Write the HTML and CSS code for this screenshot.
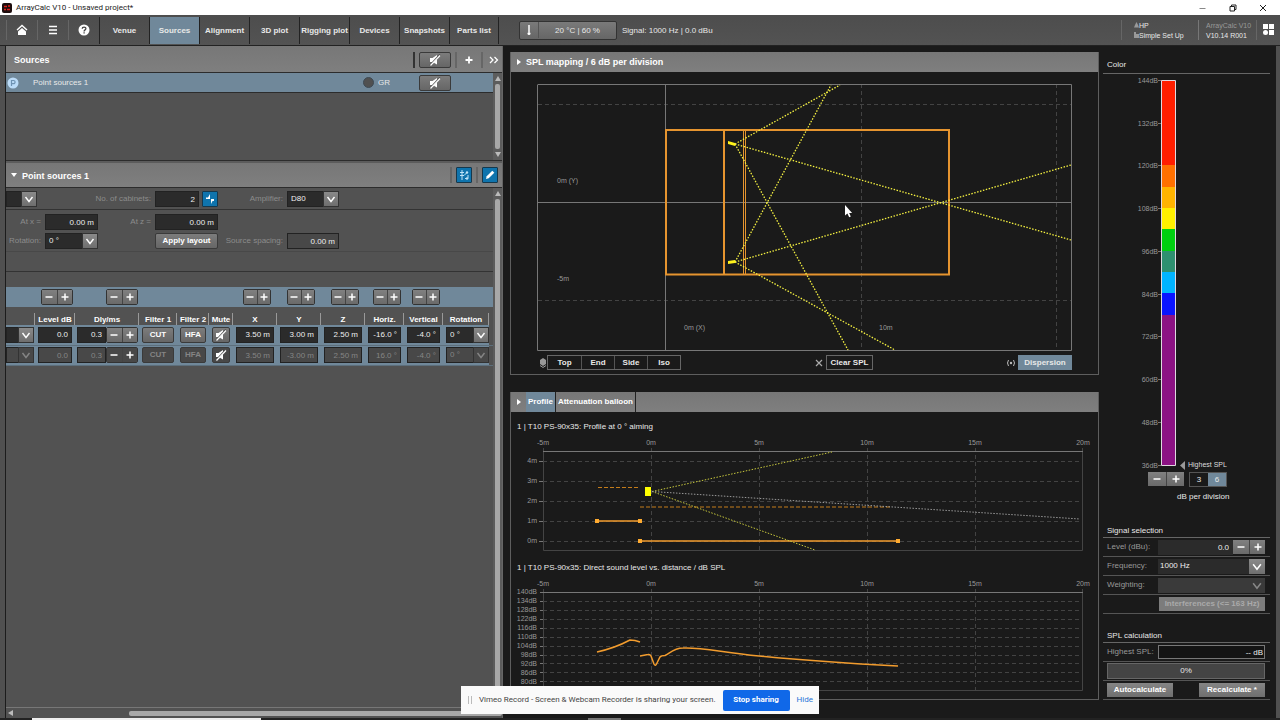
FILE: index.html
```html
<!DOCTYPE html>
<html lang="en">
<head>
    <meta charset="UTF-8">
    <title>ArrayCalc V10 - Unsaved project*</title>
    <link rel="stylesheet" href="styles.css">
</head>
<body>
    <!-- shared icons -->
    <svg class="sprite" width="0" height="0">
        <symbol id="i-mute" viewBox="0 0 12 12"><path d="M1 4h2.500L8 1v9.500L3.500 8H1z" fill="currentColor"/><path d="M1 11.500L11 .5" stroke="#555" stroke-width="1.800"/><path d="M1.500 11.500L11 1.500" stroke="currentColor" stroke-width="1.200"/></symbol>
        <symbol id="i-down" viewBox="0 0 10 10"><path d="M1.500 3L5 7.500 8.500 3" fill="none" stroke="currentColor" stroke-width="1.400"/></symbol>
        <symbol id="i-plus" viewBox="0 0 10 10"><path d="M5 1.500v7M1.500 5h7" stroke="currentColor" stroke-width="1.500"/></symbol>
        <symbol id="i-minus" viewBox="0 0 10 10"><path d="M1.500 5h7" stroke="currentColor" stroke-width="1.500"/></symbol>
    </svg>

    <header class="titlebar">
        <svg width="10" height="10" viewBox="0 0 10 10"><rect width="10" height="10" rx="2" fill="#1d0d0d"/><path d="M2 3.500h3M6 3h2M2 6.500h2M5 6.500h3" stroke="#e0201b" stroke-width="1.400"/></svg>
        <span class="title">ArrayCalc V10 - Unsaved project*</span>
        <svg class="win" width="10" height="10" viewBox="0 0 10 10"><path d="M1.500 5.500h6" stroke="#888"/></svg>
        <svg class="win" width="10" height="10" viewBox="0 0 10 10"><path d="M2 3.500h4.500V8H2zM3.500 3V2H8v4.500H7" fill="none" stroke="#222"/></svg>
        <svg class="win" width="10" height="10" viewBox="0 0 10 10"><path d="M2 2l6 6M8 2L2 8" stroke="#222"/></svg>
    </header>

    <nav class="topbar">
        <button class="icon-btn" aria-label="Home"><svg width="12" height="12" viewBox="0 0 12 12"><path d="M1 6l5-4.500L11 6" fill="none" stroke="#fff" stroke-width="1.400"/><path d="M6 4l4 3.500V11H2V7.500z" fill="#fff"/></svg></button>
        <button class="icon-btn" aria-label="Menu"><svg width="12" height="12" viewBox="0 0 12 12"><path d="M2 2.500h8M2 6h8M2 9.500h8" stroke="#fff" stroke-width="1.300"/></svg></button>
        <button class="icon-btn" aria-label="Help"><svg width="12" height="12" viewBox="0 0 12 12"><circle cx="6" cy="6" r="5.500" fill="#fff"/><path d="M4.200 4.800C4.200 2.500 8 2.600 7.900 4.700 7.800 6 6.100 5.800 6.100 7.400M6.100 8.300v1.300" fill="none" stroke="#444" stroke-width="1.300"/></svg></button>
        <button class="tab">Venue</button>
        <button class="tab active">Sources</button>
        <button class="tab">Alignment</button>
        <button class="tab">3D plot</button>
        <button class="tab">Rigging plot</button>
        <button class="tab">Devices</button>
        <button class="tab">Snapshots</button>
        <button class="tab last">Parts list</button>
        <button class="climate"><span class="thermo"><svg width="6" height="12" viewBox="0 0 6 12"><path d="M3 1v7" stroke="#fff" stroke-width="1.500"/><circle cx="3" cy="9.500" r="1.500" fill="#fff"/></svg></span><span class="climate-text">20 °C | 60 %</span></button>
        <span class="signal">Signal: 1000 Hz | 0.0 dBu</span>
        <div class="user">
            <div><svg width="5" height="6" viewBox="0 0 5 6"><path d="M2.500 0L4 3l1 2.500H0L1 3z" fill="#999"/></svg>HP</div>
            <div><svg width="5" height="6" viewBox="0 0 5 6"><path d="M0 0h2v2h3v4H0z" fill="#999"/></svg>Simple Set Up</div>
        </div>
        <div class="version"><div class="dim">ArrayCalc V10</div><div>V10.14 R001</div></div>
        <button class="apps" aria-label="Apps"><svg width="12" height="12" viewBox="0 0 12 12"><path d="M0 0h5v5H0zM6 0h5v5H6zM6 6h5v5H6z" fill="#fff"/><circle cx="2.500" cy="8.500" r="2.500" fill="#fff"/></svg></button>
    </nav>

    <main class="workspace">
        <section class="left">
            <div class="bar sources-bar">
                <h2>Sources</h2>
                <span class="sep dark"></span>
                <button class="btn mute-btn" aria-label="Mute all"><svg width="12" height="12"><use href="#i-mute"/></svg></button>
                <span class="sep"></span>
                <button class="plain" aria-label="Add"><svg width="10" height="10" viewBox="0 0 10 10"><path d="M5 1.500v7M1.500 5h7" stroke="#fff" stroke-width="1.800"/></svg></button>
                <span class="sep"></span>
                <button class="plain" aria-label="More"><svg width="10" height="10" viewBox="0 0 10 10"><path d="M1 2l3 3-3 3M5.500 2l3 3-3 3" fill="none" stroke="#fff" stroke-width="1.300"/></svg></button>
            </div>
            <div class="list">
                <div class="list-items">
                    <div class="source">
                        <svg width="12" height="12" viewBox="0 0 12 12"><circle cx="6" cy="6" r="5.500" fill="#bcdcf8"/><path d="M4.500 9V3.500h2a1.500 1.500 0 0 1 0 3.200h-2" fill="none" stroke="#6f93b3" stroke-width="1.200"/></svg>
                        <span class="source-name">Point sources 1</span>
                        <span class="dot"></span>
                        <span class="group">GR</span>
                        <button class="btn mute-btn" aria-label="Mute group"><svg width="12" height="12"><use href="#i-mute"/></svg></button>
                    </div>
                </div>
                <div class="vscroll"><i class="up"></i><b></b><i class="down"></i></div>
            </div>

            <div class="bar detail-bar">
                <i class="tri-down"></i>
                <h2>Point sources 1</h2>
                <span class="sep"></span>
                <button class="blue-btn" aria-label="Arrangement"><svg width="12" height="12" viewBox="0 0 12 12"><path d="M4 1v10M2 3.500h4M2 6.500h4M6 6.500l3-3M7 9.500h3V6" fill="none" stroke="#bfe4f7"/><circle cx="9" cy="3.500" r="1.200" fill="#bfe4f7"/><circle cx="9" cy="9.500" r="1.200" fill="#bfe4f7"/></svg></button>
                <span class="sep"></span>
                <button class="blue-btn" aria-label="Edit"><svg width="12" height="12" viewBox="0 0 12 12"><path d="M2 10l.7-2.700 5.600-5.600 2 2-5.600 5.600z" fill="#fff"/></svg></button>
            </div>
            <div class="detail">
                <div class="detail-main">
                    <div class="form first">
                        <span class="select cut"><select aria-label="Type"><option></option></select><svg><use href="#i-down"/></svg></span>
                        <label class="wide" for="cabinets">No. of cabinets:</label>
                        <div class="pair"><input id="cabinets" value="2"><button class="blue-btn" aria-label="Symmetry"><svg width="12" height="12" viewBox="0 0 12 12"><path d="M6 1v5H2V4.500h2zM7 6h3v2H8.500L7 11z" fill="#fff"/></svg></button></div>
                        <label for="amp">Amplifier:</label>
                        <span class="select"><select id="amp"><option>D80</option></select><svg><use href="#i-down"/></svg></span>
                    </div>
                    <div class="form second">
                        <label for="atx">At x =</label>
                        <input id="atx" value="0.00 m">
                        <label for="atz">At z =</label>
                        <input id="atz" value="0.00 m">
                        <span></span><span></span>
                        <label for="rot">Rotation:</label>
                        <span class="select"><select id="rot"><option>0 °</option></select><svg><use href="#i-down"/></svg></span>
                        <span></span>
                        <button class="btn">Apply layout</button>
                        <label for="spacing">Source spacing:</label>
                        <input id="spacing" class="off" value="0.00 m">
                    </div>
                    <div class="spacer"></div>
                    <table class="cabs">
                        <colgroup><col class="c29"><col class="c40"><col class="c64"><col class="c38"><col class="c32"><col class="c24"><col class="c44"><col class="c44"><col class="c44"><col class="c39"><col class="c39"><col class="c46"><col></colgroup>
                        <thead>
                            <tr class="steps">
                                <td></td>
                                <td><span class="step"><button aria-label="Level down"><svg><use href="#i-minus"/></svg></button><button aria-label="Level up"><svg><use href="#i-plus"/></svg></button></span></td>
                                <td class="end"><span class="step"><button aria-label="Delay down"><svg><use href="#i-minus"/></svg></button><button aria-label="Delay up"><svg><use href="#i-plus"/></svg></button></span></td>
                                <td></td><td></td><td></td>
                                <td><span class="step small"><button aria-label="X down"><svg><use href="#i-minus"/></svg></button><button aria-label="X up"><svg><use href="#i-plus"/></svg></button></span></td>
                                <td><span class="step small"><button aria-label="Y down"><svg><use href="#i-minus"/></svg></button><button aria-label="Y up"><svg><use href="#i-plus"/></svg></button></span></td>
                                <td><span class="step small"><button aria-label="Z down"><svg><use href="#i-minus"/></svg></button><button aria-label="Z up"><svg><use href="#i-plus"/></svg></button></span></td>
                                <td><span class="step small"><button aria-label="Horizontal down"><svg><use href="#i-minus"/></svg></button><button aria-label="Horizontal up"><svg><use href="#i-plus"/></svg></button></span></td>
                                <td><span class="step small"><button aria-label="Vertical down"><svg><use href="#i-minus"/></svg></button><button aria-label="Vertical up"><svg><use href="#i-plus"/></svg></button></span></td>
                                <td></td><td></td>
                            </tr>
                            <tr class="heads">
                                <th></th><th>Level dB</th><th>Dly/ms</th><th>Filter 1</th><th>Filter 2</th><th>Mute</th><th>X</th><th>Y</th><th>Z</th><th>Horiz.</th><th>Vertical</th><th>Rotation</th><th class="rest"></th>
                            </tr>
                        </thead>
                        <tbody>
                            <tr>
                                <td class="flush"><span class="select"><select aria-label="Cabinet"><option></option></select><svg><use href="#i-down"/></svg></span></td>
                                <td><input aria-label="Level" value="0.0"></td>
                                <td class="tight"><span class="num"><input aria-label="Delay" value="0.3"><span class="step"><button aria-label="Less"><svg><use href="#i-minus"/></svg></button><button aria-label="More"><svg><use href="#i-plus"/></svg></button></span></span></td>
                                <td><button class="btn cell">CUT</button></td>
                                <td><button class="btn cell">HFA</button></td>
                                <td><button class="btn cell" aria-label="Mute"><svg width="12" height="12"><use href="#i-mute"/></svg></button></td>
                                <td><input aria-label="X" value="3.50 m"></td>
                                <td><input aria-label="Y" value="3.00 m"></td>
                                <td><input aria-label="Z" value="2.50 m"></td>
                                <td><input aria-label="Horizontal" value="-16.0 °"></td>
                                <td><input aria-label="Vertical" value="-4.0 °"></td>
                                <td class="rot"><span class="select"><select aria-label="Rotation"><option>0 °</option></select><svg><use href="#i-down"/></svg></span></td>
                                <td class="rest"></td>
                            </tr>
                            <tr class="linked">
                                <td class="flush"><span class="select"><select aria-label="Cabinet"><option></option></select><svg><use href="#i-down"/></svg></span></td>
                                <td><input aria-label="Level" value="0.0"></td>
                                <td class="tight"><span class="num"><input aria-label="Delay" value="0.3"><span class="step"><button aria-label="Less"><svg><use href="#i-minus"/></svg></button><button aria-label="More"><svg><use href="#i-plus"/></svg></button></span></span></td>
                                <td><button class="btn cell">CUT</button></td>
                                <td><button class="btn cell">HFA</button></td>
                                <td><button class="btn cell mute" aria-label="Mute"><svg width="12" height="12"><use href="#i-mute"/></svg></button></td>
                                <td><input aria-label="X" value="3.50 m"></td>
                                <td><input aria-label="Y" value="-3.00 m"></td>
                                <td><input aria-label="Z" value="2.50 m"></td>
                                <td><input aria-label="Horizontal" value="16.0 °"></td>
                                <td><input aria-label="Vertical" value="-4.0 °"></td>
                                <td class="rot"><span class="select"><select aria-label="Rotation"><option>0 °</option></select><svg><use href="#i-down"/></svg></span></td>
                                <td class="rest"></td>
                            </tr>
                        </tbody>
                    </table>
                </div>
                <div class="vscroll"><i class="up"></i><b></b><i class="down"></i></div>
            </div>
            <div class="hscroll"><i></i><b></b></div>
        </section>

        <section class="center">
            <div class="panel">
                <div class="bar"><i class="tri-right"></i><h2>SPL mapping / 6 dB per division</h2></div>
                <svg class="plot" viewBox="511 72 587 280">
                    <g class="grid">
                        <path d="M538 104.500H1071M538 300.500H1071M861.500 84V350M1056.500 84V350"/>
                    </g>
                    <path class="axis" d="M538 84.500H1071.500V350.500H537.500V84.500M665.500 84V350M538 202.500H1071"/>
                    <path class="venue" d="M666 130H949V274.500H666zM724 130V274"/>
                    <path class="venue thin" d="M743.500 130V274M745.500 130V274"/>
                    <g class="rays">
                        <path d="M735 144L840 85M735 144L1071 240M735 144L848 350"/>
                        <path d="M735 262L831 85M735 262L1071 165M735 262L895 350"/>
                    </g>
                    <path d="M728 141l7 2v3l-7-2zM728 261l7-1v3l-7 1z" fill="#fff21a"/>
                    <g class="labels">
                        <text x="557" y="183">0m (Y)</text>
                        <text x="557" y="281">-5m</text>
                        <text x="684" y="330">0m (X)</text>
                        <text x="879" y="330">10m</text>
                    </g>
                    <path d="M845 205v10.500l2.400-2 1.800 3.700 1.600-.8-1.700-3.500h3z" fill="#fff"/>
                </svg>
                <div class="tools">
                    <svg width="8" height="10" viewBox="0 0 8 10"><path d="M4 0l3 2v4L4 8 1 6V2z" fill="#999"/><path d="M1 7.500L4 9.500l3-2" fill="none" stroke="#999"/></svg>
                    <div class="views"><button>Top</button><button>End</button><button>Side</button><button>Iso</button></div>
                    <svg class="push" width="8" height="8" viewBox="0 0 8 8"><path d="M1 1l6 6M7 1L1 7" stroke="#aaa" stroke-width="1.200"/></svg>
                    <button class="ghost">Clear SPL</button>
                    <svg class="push2" width="10" height="8" viewBox="0 0 10 8"><path d="M2.500 1Q.5 4 2.500 7M7.500 1q2 3 0 6" fill="none" stroke="#bbb"/><circle cx="5" cy="4" r="1.200" fill="#bbb"/></svg>
                    <button class="ghost on">Dispersion</button>
                </div>
            </div>

            <div class="panel profile">
                <div class="bar tabs"><i class="tri-right"></i><button class="active">Profile</button><button>Attenuation balloon</button></div>
                <h3>1 | T10 PS-90x35: Profile at 0 ° aiming</h3>
                <svg class="plot" viewBox="511 436 587 122">
                    <g class="grid">
                        <path d="M543 461.500H1082M543 481.500H1082M543 501.500H1082M543 521.500H1082M543 541.500H1082M651.500 448V550M759.500 448V550M867.500 448V550M975.500 448V550"/>
                    </g>
                    <path class="frame" d="M543.500 448V550.500H1082.500V448"/>
                    <path class="axis" d="M543 451.500H1083M539 461.500h4M539 481.500h4M539 501.500h4M539 521.500h4M539 541.500h4"/>
                    <path class="ear" d="M598 487.500H640M640 507H892"/>
                    <path class="curve" d="M597 521H640M640 541H898"/>
                    <path d="M595 519h4v4h-4zM638 519h4v4h-4zM638 539h4v4h-4zM896 539h4v4h-4z" fill="#ffab30"/>
                    <g class="rays fine"><path d="M652 491.500L832 452M652 491.500L815 550"/><path class="aim" d="M652 491.500L1080 519"/></g>
                    <path d="M645 487h6v9h-6z" fill="#ffff00"/>
                    <g class="labels mid"><text x="543" y="445">-5m</text><text x="651" y="445">0m</text><text x="759" y="445">5m</text><text x="867" y="445">10m</text><text x="975" y="445">15m</text><text x="1083" y="445">20m</text></g>
                    <g class="labels right-end"><text x="537" y="463">4m</text><text x="537" y="483">3m</text><text x="537" y="503">2m</text><text x="537" y="523">1m</text><text x="537" y="543">0m</text></g>
                </svg>
                <h3>1 | T10 PS-90x35: Direct sound level vs. distance / dB SPL</h3>
                <svg class="plot" viewBox="511 577 587 122">
                    <g class="grid">
                        <path d="M543 601.500H1082M543 610.500H1082M543 619.500H1082M543 628.500H1082M543 637.500H1082M543 646.500H1082M543 655.500H1082M543 663.500H1082M543 672.500H1082M543 681.500H1082M651.500 589V690M759.500 589V690M867.500 589V690M975.500 589V690"/>
                    </g>
                    <path class="frame" d="M543.500 589V690.500H1082.500V589"/>
                    <path class="axis" d="M540 592.500H1083M540 601.500h3M540 610.500h3M540 619.500h3M540 628.500h3M540 637.500h3M540 646.500h3M540 655.500h3M540 663.500h3M540 672.500h3M540 681.500h3"/>
                    <path class="curve" d="M597 652Q615 648 630 640Q635 640 640 642"/>
                    <path class="curve" d="M640 656L648 654.500Q650 654 651 656L654 664Q655.500 667 657 663L660 657Q661 655.500 665 655.500C670 653 674 648 683 648C700 647 720 652 759 656Q820 662 898 666"/>
                    <g class="labels mid"><text x="543" y="586">-5m</text><text x="651" y="586">0m</text><text x="759" y="586">5m</text><text x="867" y="586">10m</text><text x="975" y="586">15m</text><text x="1083" y="586">20m</text></g>
                    <g class="labels right-end"><text x="537" y="594">140dB</text><text x="537" y="603">134dB</text><text x="537" y="612">128dB</text><text x="537" y="621">122dB</text><text x="537" y="630">116dB</text><text x="537" y="639">110dB</text><text x="537" y="648">104dB</text><text x="537" y="657">98dB</text><text x="537" y="666">92dB</text><text x="537" y="675">86dB</text><text x="537" y="684">80dB</text></g>
                </svg>
            </div>
        </section>

        <aside class="right">
            <h3 class="color">Color</h3>
            <svg class="scale" width="167" height="397" viewBox="1103 74 167 397">
                <path d="M1161 80h14v85h-14z" fill="#ff1e00"/>
                <path d="M1161 165h14v22h-14z" fill="#ff7000"/>
                <path d="M1161 187h14v21h-14z" fill="#ffb400"/>
                <path d="M1161 208h14v21h-14z" fill="#fff000"/>
                <path d="M1161 229h14v22h-14z" fill="#00d010"/>
                <path d="M1161 251h14v21h-14z" fill="#2e9070"/>
                <path d="M1161 272h14v21h-14z" fill="#00b4ff"/>
                <path d="M1161 293h14v22h-14z" fill="#0a14ff"/>
                <path d="M1161 315h14v150h-14z" fill="#8c1284"/>
                <path d="M1161.500 80.500h14v385h-14z" fill="none" stroke="#e0d8e0"/>
                <path class="axis" d="M1158 80.500h3M1158 123.500h3M1158 165.500h3M1158 208.500h3M1158 251.500h3M1158 294.500h3M1158 336.500h3M1158 379.500h3M1158 422.500h3M1158 465.500h3"/>
                <path d="M1185 461v9l-5-4.500z" fill="#999"/>
                <g class="labels right-end"><text x="1158" y="83">144dB</text><text x="1158" y="126">132dB</text><text x="1158" y="168">120dB</text><text x="1158" y="211">108dB</text><text x="1158" y="254">96dB</text><text x="1158" y="297">84dB</text><text x="1158" y="339">72dB</text><text x="1158" y="382">60dB</text><text x="1158" y="425">48dB</text><text x="1158" y="468">36dB</text></g>
                <text class="highest" x="1188" y="467">Highest SPL</text>
            </svg>
            <div class="division">
                <span class="step flat"><button aria-label="Range down"><svg><use href="#i-minus"/></svg></button><button aria-label="Range up"><svg><use href="#i-plus"/></svg></button></span>
                <span class="toggle"><button>3</button><button class="active">6</button></span>
            </div>
            <p class="per">dB per division</p>

            <h3>Signal selection</h3>
            <div class="line"><label for="level">Level (dBu):</label><span class="num"><input id="level" value="0.0"><span class="step flat"><button aria-label="Level down"><svg><use href="#i-minus"/></svg></button><button aria-label="Level up"><svg><use href="#i-plus"/></svg></button></span></span></div>
            <div class="line"><label for="freq">Frequency:</label><span class="select"><select id="freq"><option>1000 Hz</option></select><svg><use href="#i-down"/></svg></span></div>
            <div class="line"><label for="weight">Weighting:</label><span class="select disabled"><select id="weight" disabled><option></option></select><svg><use href="#i-down"/></svg></span></div>
            <div class="line"><button class="flat-btn faded">Interferences (&lt;= 163 Hz)</button></div>

            <h3 class="calc">SPL calculation</h3>
            <div class="line"><label for="hspl">Highest SPL:</label><input id="hspl" class="outlined" value="-- dB" readonly></div>
            <div class="line"><div class="progress" role="progressbar" aria-valuenow="0">0%</div></div>
            <div class="line"><button class="flat-btn">Autocalculate</button><button class="flat-btn">Recalculate *</button></div>
        </aside>
    </main>

    <footer class="taskbar"><span class="t1"></span><span class="t2"></span></footer>

    <div class="share">
        <svg width="4" height="10" viewBox="0 0 4 10"><path d="M.5 1v8M3.500 1v8" stroke="#bbb"/></svg>
        <span>Vimeo Record - Screen &amp; Webcam Recorder is sharing your screen.</span>
        <button>Stop sharing</button>
        <a href="#">Hide</a>
    </div>
</body>
</html>
```

FILE: styles.css
```css
* {
    box-sizing: border-box;
    margin: 0;
    padding: 0;
}
body {
    display: flex;
    flex-direction: column;
    min-height: 100vh;
    background: #1a1a1a;
    color: #e8e8e8;
    font: 8px/10px "Liberation Sans", Arial, sans-serif;
}
button,
input,
select {
    font: inherit;
    color: inherit;
    border: 0;
    background: none;
    border-radius: 0;
    min-width: 0;
    outline: 0;
}
button {
    font-weight: bold;
    white-space: nowrap;
}
button svg,
.titlebar svg,
.share svg {
    display: block;
    flex: none;
}
h2 {
    font-size: 9px;
    line-height: 12px;
}
h3 {
    font-size: 8px;
    font-weight: normal;
}
.sprite {
    position: absolute;
}

/* title bar */
.titlebar {
    display: flex;
    align-items: center;
    height: 15px;
    padding: 0 12px 0 2px;
    background: #fff;
    color: #222;
    font-family: Roboto, sans-serif;
}
.titlebar .title {
    flex: 1;
    padding-left: 4px;
}
.titlebar .win {
    margin-left: 20px;
}

/* top navigation */
.topbar {
    display: flex;
    align-items: center;
    height: 31px;
    padding-left: 6px;
    background: linear-gradient(#4d4d4d, #535353);
    border-bottom: 1px solid #222;
}
.icon-btn {
    display: flex;
    align-items: center;
    justify-content: center;
    width: 31px;
    height: 20px;
    border-left: 1px solid #666;
}
.tab {
    width: 50px;
    height: 27px;
    padding-top: 2px;
    border-left: 1px solid #222;
}
.tab.active {
    background: #70889a;
}
.tab.last {
    border-right: 1px solid #222;
}
.climate {
    display: flex;
    align-items: center;
    width: 98px;
    height: 19px;
    margin-left: 20px;
    background: linear-gradient(#7a7a7a, #666);
    border: 1px solid #333;
    border-radius: 2px;
    font-weight: normal;
}
.thermo {
    padding: 2px 6px;
    border-right: 1px solid #555;
}
.climate-text {
    flex: 1;
    padding-top: 1px;
}
.signal {
    margin-left: 5px;
    padding-top: 2px;
}
.user {
    margin-left: auto;
    width: 77px;
    height: 20px;
    padding-left: 12px;
    border-left: 1px solid #666;
    font-size: 7px;
}
.version {
    width: 59px;
    height: 20px;
    padding-left: 7px;
    border-left: 1px solid #777;
    border-right: 1px solid #666;
    font-size: 7px;
    white-space: nowrap;
}
.user div,
.version div {
    line-height: 9px;
    padding-top: 1px;
}
.version .dim {
    color: #999;
}
.apps {
    padding: 0 5px 0 6px;
}

/* common parts */
.workspace {
    display: grid;
    grid-template-columns: 503px 1fr 181px;
    flex: 1;
}
.bar {
    display: flex;
    align-items: center;
    height: 20px;
    background: linear-gradient(#777, #7f7f7f);
    color: #fff;
}
.sep {
    width: 2px;
    height: 16px;
    background: #666;
}
.sep.dark {
    background: #333;
}
.btn {
    display: flex;
    align-items: center;
    justify-content: center;
    height: 16px;
    background: linear-gradient(#7c7c7c, #666);
    border: 1px solid #3a3a3a;
    border-radius: 2px;
    color: #fff;
}
.mute-btn {
    width: 32px;
}
.blue-btn {
    display: flex;
    align-items: center;
    justify-content: center;
    width: 16px;
    height: 16px;
    background: #0f74ad;
    border: 1px solid #16384c;
    border-radius: 1px;
}
input {
    height: 16px;
    padding: 0 3px;
    background: #2b2b2b;
    border: 1px solid #222;
    color: #eee;
    text-align: right;
}
.select {
    display: grid;
    height: 16px;
}
.select select,
.select svg {
    grid-area: 1 / 1;
}
.select select {
    appearance: none;
    padding: 0 3px;
    background: #2b2b2b;
    border: 1px solid #222;
    color: #eee;
}
.select svg {
    width: 16px;
    height: 16px;
    padding: 2px;
    justify-self: end;
    background: linear-gradient(#8a8a8a, #6e6e6e);
    border: 1px solid #333;
    color: #fff;
    pointer-events: none;
}
.step {
    display: inline-flex;
    border: 1px solid #333;
    border-radius: 2px;
    color: #fff;
}
.step button {
    width: 15px;
    height: 14px;
    padding: 2px;
    background: linear-gradient(#808080, #6a6a6a);
}
.step button + button {
    border-left: 1px solid #444;
}
.step svg {
    width: 10px;
    height: 10px;
}
.step.small button {
    width: 13px;
    padding: 2px 1px;
}
.num {
    display: flex;
    min-width: 0;
}
.num input {
    flex: 1;
    width: 0;
}
.tri-down {
    border: 3px solid transparent;
    border-top: 4px solid #fff;
    border-bottom: 0;
}
.tri-right {
    border: 3px solid transparent;
    border-left: 4px solid #fff;
    border-right: 0;
}

/* left side */
.left {
    display: flex;
    flex-direction: column;
    padding-left: 6px;
    background: #525252;
    box-shadow: inset 5px 0 #505050, inset 6px 0 #1c1c1c;
    border-right: 1px solid #666;
}
.sources-bar {
    height: 27px;
    padding: 1px 0 0 8px;
    border-bottom: 1px solid #2c2c2c;
}
.sources-bar h2 {
    flex: 1;
}
.sources-bar .btn {
    margin: 0 4px;
}
.plain {
    padding: 0 7px;
}
.plain:last-child {
    padding: 0 3px 0 6px;
}
.list,
.detail {
    display: flex;
}
.list {
    height: 88px;
    border-bottom: 1px solid #2c2c2c;
}
.list-items,
.detail-main {
    flex: 1;
    min-width: 0;
}
.source {
    display: flex;
    align-items: center;
    height: 20px;
    padding: 0 42px 0 1px;
    background: #70889a;
    border-bottom: 1px solid #2c2c2c;
}
.source-name {
    flex: 1;
    padding-left: 14px;
}
.dot {
    width: 11px;
    height: 11px;
    border-radius: 50%;
    background: #505050;
    border: 1px solid #3e4a54;
}
.group {
    width: 45px;
    padding-left: 4px;
}
.vscroll {
    display: flex;
    flex-direction: column;
    align-items: center;
    gap: 3px;
    width: 9px;
    padding: 3px 0;
    background: #5c5c5c;
}
.vscroll b {
    flex: 1;
    width: 5px;
    border-radius: 2px;
    background: #a8a8a8;
}
.vscroll i {
    border: 3px solid transparent;
}
.vscroll .up {
    border-top: 0;
    border-bottom: 5px solid #bbb;
}
.vscroll .down {
    border-bottom: 0;
    border-top: 5px solid #bbb;
}
.detail-bar {
    height: 27px;
    padding: 0 4px 0 5px;
    gap: 4px;
    border-top: 2px solid #5c5c5c;
    border-bottom: 1px solid #2c2c2c;
}
.detail-bar h2 {
    flex: 1;
    padding: 1px 0 0 1px;
}
.detail {
    flex: 1;
}
.form {
    display: grid;
    grid-template-columns: 35px 53px 49px 63px 61px 52px;
    column-gap: 4px;
    align-items: center;
    border-bottom: 1px solid #333;
}
.form.first {
    padding: 3px 0 2px;
}
.form.second {
    row-gap: 3px;
    padding: 4px 0 2px;
    border-color: #484848;
}
.form label {
    text-align: right;
    white-space: nowrap;
    color: #8c8c8c;
}
.form .wide {
    grid-column: 2 / 4;
}
.form .cut {
    width: 31px;
}
.form .btn {
    width: 100%;
}
.pair {
    display: flex;
    gap: 3px;
}
.pair input {
    flex: 1;
}
.form .off {
    background: #484848;
}
.spacer {
    height: 20px;
    margin-bottom: 15px;
    border-bottom: 1px solid #333;
}
.cabs {
    width: 100%;
    table-layout: fixed;
    border-collapse: collapse;
}
.c24 { width: 24px; }
.c29 { width: 29px; }
.c32 { width: 32px; }
.c38 { width: 38px; }
.c39 { width: 39px; }
.c40 { width: 40px; }
.c44 { width: 44px; }
.c46 { width: 46px; }
.c64 { width: 64px; }
.cabs td {
    height: 20px;
    padding: 0 3px;
    text-align: center;
    background: #70889a;
}
.cabs td > * {
    width: 100%;
    vertical-align: middle;
}
.cabs .steps td {
    padding: 0 2px 0 6px;
}
.cabs .steps .step {
    width: auto;
}
.cabs .steps .end {
    padding: 0 1px;
    text-align: right;
}
.cabs th {
    height: 18px;
    font-size: 8px;
    color: #fff;
    vertical-align: bottom;
    white-space: nowrap;
    background: linear-gradient(#999, #999) right bottom / 1px 12px no-repeat;
}
.cabs .flush {
    padding: 0 1px 0 0;
}
.cabs .tight {
    padding: 0 1px 0 2px;
}
.cabs .rot {
    padding: 0 0 0 3px;
}
.cabs .rest {
    background: none;
}
.cabs tbody td {
    border-bottom: 1px solid #5d6f7c;
}
.linked input,
.linked select,
.linked .select svg,
.linked .cell {
    background: #484848;
    color: #858585;
}
.linked .mute {
    color: #fff;
}
.linked .step button {
    background: #484848;
}
.hscroll {
    display: flex;
    align-items: center;
    gap: 88px;
    height: 11px;
    padding-left: 2px;
    border-top: 1px solid #777;
}
.hscroll i {
    border: 3px solid transparent;
    border-left: 0;
    border-right: 5px solid #bbb;
}
.hscroll b {
    flex: 1;
    height: 5px;
    margin-left: 28px;
    border-radius: 2px;
    background: #a8a8a8;
}

/* plots */
.center {
    padding: 6px 0 0 7px;
}
.panel {
    border: 1px solid #5e5e5e;
    border-top: 0;
}
.panel .bar {
    height: 20px;
    padding-left: 6px;
    gap: 5px;
}
.plot {
    display: block;
    width: 100%;
    height: auto;
}
.grid path {
    fill: none;
    stroke: #434343;
    stroke-dasharray: 4 3;
}
.axis {
    fill: none;
    stroke: #777;
}
.frame {
    fill: none;
    stroke: #444;
}
.venue {
    fill: none;
    stroke: #e5942f;
    stroke-width: 2;
}
.venue.thin {
    stroke-width: 1;
}
.ear {
    fill: none;
    stroke: #c47c1a;
    stroke-dasharray: 4 2;
}
.rays path {
    fill: none;
    stroke: #f4f040;
    stroke-width: 1.3;
    stroke-dasharray: 1.5 1.5;
}
.rays.fine path {
    stroke: #c8c83c;
    stroke-width: 1;
}
.rays.fine .aim {
    stroke: #999;
}
.curve {
    fill: none;
    stroke: #f29c2e;
    stroke-width: 1.5;
}
.labels {
    font-size: 7px;
    fill: #999;
}
.mid {
    text-anchor: middle;
}
.right-end {
    text-anchor: end;
}
.tools {
    display: flex;
    align-items: center;
    height: 22px;
    padding: 0 26px 1px 28px;
}
.views {
    display: flex;
    border: 1px solid #666;
}
.views button {
    width: 33px;
    height: 13px;
}
.views button + button {
    border-left: 1px solid #555;
}
.push {
    margin-left: auto;
}
.ghost {
    margin-left: 3px;
    width: 47px;
    height: 15px;
    border: 1px solid #666;
}
.push2 {
    margin-left: 133px;
}
.ghost.on {
    width: 54px;
    margin-left: 2px;
    background: #70889a;
    border-color: #70889a;
}
.profile {
    margin-top: 17px;
}
.tabs button {
    height: 20px;
    padding: 0 2px;
    border-right: 1px solid #222;
}
.tabs button + button {
    margin-left: -5px;
}
.tabs .active {
    background: #70889a;
}
.profile h3 {
    padding: 10px 0 0 6px;
    height: 24px;
}
.profile .plot + h3 {
    height: 19px;
    padding-top: 5px;
}

/* right side */
.right {
    padding: 14px 6px 0 4px;
    border-right: 4px solid #505050;
}
.right h3 {
    padding-left: 4px;
    height: 14px;
    line-height: 13px;
    border-bottom: 1px solid #666;
}
.right .color {
    line-height: 10px;
}
.scale {
    display: block;
}
.highest {
    font-size: 7px;
    fill: #ddd;
}
.division {
    display: flex;
    gap: 5px;
    margin-left: 45px;
    padding-top: 1px;
}
.step.flat {
    border: 0;
    border-radius: 0;
}
.step.flat button {
    width: 18px;
    padding: 2px 4px;
}
.toggle {
    display: flex;
    border: 1px solid #555;
}
.toggle button {
    width: 18px;
    height: 13px;
    font-weight: normal;
}
.toggle .active {
    background: #70889a;
}
.per {
    margin: 5px 0 22px;
    padding-left: 74px;
}
.line {
    display: flex;
    align-items: center;
    justify-content: space-between;
    height: 19px;
    padding: 0 5px 0 4px;
    border-bottom: 1px solid #555;
}
.line label {
    width: 51px;
    flex: none;
    color: #999;
    white-space: nowrap;
}
.line .num,
.line .select,
.line input {
    flex: 1;
}
.line .num {
    align-items: center;
}
.line input,
.line select {
    height: 15px;
    border: 0;
    padding: 0 4px;
}
.line .select {
    height: 15px;
}
.line .select select {
    padding: 0 2px;
}
.line .select svg {
    height: 15px;
    border: 0;
}
.line .step.flat button {
    width: 16px;
    padding: 2px 3px;
}
.line .disabled select,
.line .disabled svg {
    background: #3a3a3a;
    color: #888;
    opacity: 1;
}
.line .outlined {
    padding: 0 1px;
    height: 14px;
    background: #141414;
    border: 1px solid #777;
}
.flat-btn {
    width: 66px;
    height: 14px;
    background: linear-gradient(#858585, #6f6f6f);
    color: #fff;
}
.flat-btn.faded {
    width: 106px;
    margin-left: auto;
    background: #7c7c7c;
    color: #aaa;
}
.right .calc {
    margin-top: 15px;
}
.progress {
    flex: 1;
    height: 16px;
    background: #444;
    border: 1px solid #666;
    line-height: 14px;
    text-align: center;
}

/* bottom edge */
.taskbar {
    display: flex;
    height: 2px;
    padding-left: 32px;
    gap: 327px;
    background: #222;
}
.t1 {
    width: 229px;
    background: #eee;
}
.t2 {
    width: 33px;
    background: #777;
}
.share {
    position: fixed;
    left: 50%;
    bottom: 6px;
    transform: translateX(-50%);
    display: flex;
    align-items: center;
    width: 358px;
    height: 28px;
    padding: 0 6px 0 7px;
    background: #fafafa;
    color: #444;
    white-space: nowrap;
    font-family: Roboto, sans-serif;
}
.share span {
    padding-left: 7px;
    flex: 1;
}
.share button {
    flex: none;
    width: 67px;
    height: 21px;
    border-radius: 2px;
    background: #1068e8;
    color: #fff;
    font-weight: bold;
}
.share a {
    margin-left: 7px;
    color: #2a74d8;
    text-decoration: none;
}
```
